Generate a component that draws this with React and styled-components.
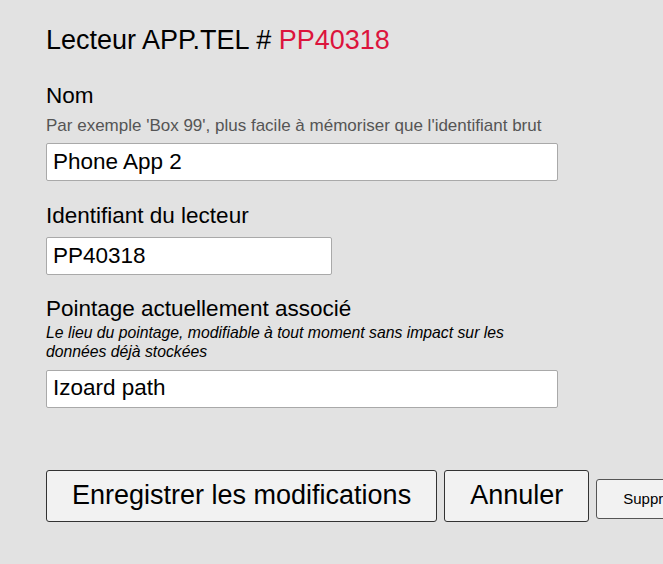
import React from "react";
import styled, { createGlobalStyle } from "styled-components";

const Global = createGlobalStyle`
  html, body { margin: 0; padding: 0; background: #e2e2e2; }
  body { font-family: "Liberation Sans", Arial, sans-serif; color: #000; overflow: hidden; }
`;

const Page = styled.div`
  padding: 25px 0 0 46px;
  width: 617px;
  box-sizing: border-box;
`;

const Title = styled.h1`
  margin: 0 0 28px;
  font-size: 27px;
  line-height: 31px;
  font-weight: normal;
  white-space: nowrap;
`;

const Accent = styled.span`
  color: #dc143c;
`;

const Field = styled.div`
  width: 512px;
  margin-bottom: ${(p) => p.$gap}px;
`;

const Label = styled.label`
  display: block;
  font-size: 22.5px;
  line-height: 24px;
  white-space: nowrap;
`;

const Hint = styled.div`
  margin-top: 9px;
  font-size: 17px;
  line-height: 18px;
  color: #555;
  white-space: nowrap;
`;

const Note = styled.div`
  margin-top: 1.5px;
  font-size: 15.75px;
  line-height: 19px;
  font-style: italic;
  color: #000;
`;

const Input = styled.input`
  display: block;
  box-sizing: border-box;
  width: ${(p) => p.$w}px;
  height: 38px;
  margin-top: ${(p) => p.$mt}px;
  padding: 0 6px 1px;
  border: 1px solid #a9a9a9;
  border-radius: 2px;
  background: #fff;
  font-family: "Liberation Sans", Arial, sans-serif;
  font-size: 22.5px;
  color: #000;
  outline: none;
`;

const Actions = styled.div`
  display: flex;
  align-items: baseline;
  gap: 7px;
  margin-top: 62px;
  white-space: nowrap;
`;

const Button = styled.button`
  flex: none;
  box-sizing: border-box;
  height: ${(p) => (p.$small ? 40 : 52)}px;
  padding: ${(p) => (p.$small ? "0 26px" : "0 25px")};
  border: 1px solid ${(p) => (p.$small ? "#555" : "#333")};
  border-radius: 3px;
  background: #f2f2f2;
  font-family: "Liberation Sans", Arial, sans-serif;
  font-size: ${(p) => (p.$small ? 15 : 27)}px;
  color: #000;
`;

export default function App() {
  return (
    <>
      <Global />
      <Page>
        <Title>
          Lecteur APP.TEL # <Accent>PP40318</Accent>
        </Title>
        <Field $gap={23}>
          <Label>Nom</Label>
          <Hint>Par exemple 'Box 99', plus facile à mémoriser que l'identifiant brut</Hint>
          <Input $w={512} $mt={8} defaultValue="Phone App 2" />
        </Field>
        <Field $gap={22}>
          <Label>Identifiant du lecteur</Label>
          <Input $w={286} $mt={9} defaultValue="PP40318" />
        </Field>
        <Field $gap={0}>
          <Label>Pointage actuellement associé</Label>
          <Note>
            Le lieu du pointage, modifiable à tout moment sans impact sur les données déjà stockées
          </Note>
          <Input $w={512} $mt={9} defaultValue="Izoard path" />
        </Field>
        <Actions>
          <Button>Enregistrer les modifications</Button>
          <Button>Annuler</Button>
          <Button $small>Supprimer</Button>
        </Actions>
      </Page>
    </>
  );
}
